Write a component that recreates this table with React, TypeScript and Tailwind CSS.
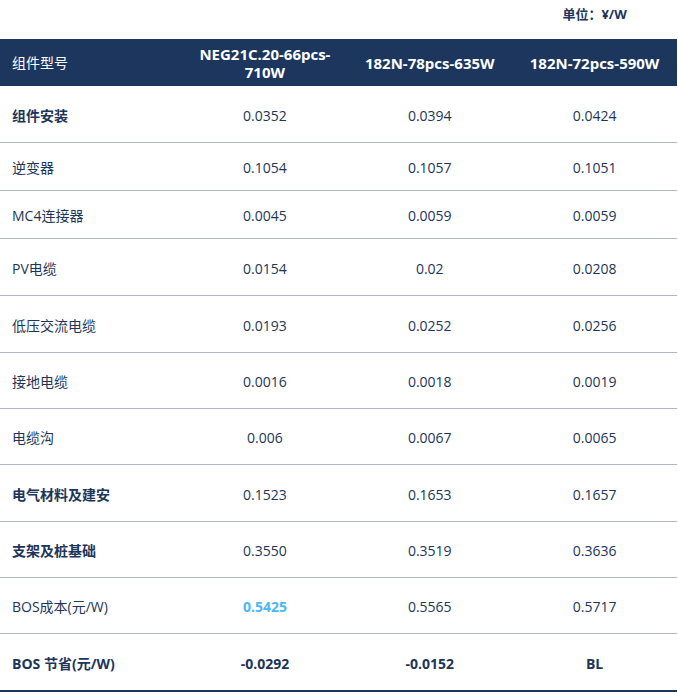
// BOS 成本对比表：三种组件型号的每瓦 BOS 分项成本，末行为相对基准（BL）的节省。

type Row = {
  label: string;
  values: [string, string, string];
  /** 行高（px），参照原图逐行量出 */
  height: string;
  bold?: boolean;
  /** 需要高亮的列（浅蓝加粗） */
  highlight?: number;
};

const MODELS = ['NEG21C.20-66pcs-710W', '182N-78pcs-635W', '182N-72pcs-590W'];

const ROWS: Row[] = [
  { label: '组件安装', values: ['0.0352', '0.0394', '0.0424'], height: 'h-[57px]', bold: true },
  { label: '逆变器', values: ['0.1054', '0.1057', '0.1051'], height: 'h-[48px]' },
  { label: 'MC4连接器', values: ['0.0045', '0.0059', '0.0059'], height: 'h-[48px]' },
  { label: 'PV电缆', values: ['0.0154', '0.02', '0.0208'], height: 'h-[57px]' },
  { label: '低压交流电缆', values: ['0.0193', '0.0252', '0.0256'], height: 'h-[57px]' },
  { label: '接地电缆', values: ['0.0016', '0.0018', '0.0019'], height: 'h-[56px]' },
  { label: '电缆沟', values: ['0.006', '0.0067', '0.0065'], height: 'h-[56px]' },
  { label: '电气材料及建安', values: ['0.1523', '0.1653', '0.1657'], height: 'h-[57px]', bold: true },
  { label: '支架及桩基础', values: ['0.3550', '0.3519', '0.3636'], height: 'h-[56px]', bold: true },
  { label: 'BOS成本(元/W)', values: ['0.5425', '0.5565', '0.5717'], height: 'h-[56px]', highlight: 0 },
];

const FONT = "font-['Open_Sans','Noto_Sans_CJK_SC',sans-serif]";

export default function App() {
  return (
    <div className={`w-[678px] bg-white text-[14px] text-[#1c3559] ${FONT}`}>
      <div className="w-[677px]">
        {/* 单位：对齐最后一列 */}
        <div className="grid h-[39px] grid-cols-[182.5px_1fr_1fr_1fr]">
          <span className="col-start-4 pt-[4px] text-center text-[13px] font-bold leading-5">
            单位：¥/W
          </span>
        </div>

        <div className="grid h-[47px] grid-cols-[182.5px_1fr_1fr_1fr] items-center bg-[#1c365e] text-white">
          <span className="pl-3 leading-5">组件型号</span>
          {MODELS.map((model) => (
            <span key={model} className="px-3 text-center text-[15px] font-bold leading-[18px] [overflow-wrap:anywhere]">
              {model.replace('pcs-', 'pcs-\u200b')}
            </span>
          ))}
        </div>

        {ROWS.map((row) => (
          <div
            key={row.label}
            className={`grid grid-cols-[182.5px_1fr_1fr_1fr] items-center border-b border-[#adb7c8] pt-[2px] ${row.height}`}
          >
            <span className={`pl-3 ${row.bold ? 'font-bold' : ''}`}>{row.label}</span>
            {row.values.map((value, i) => (
              <span
                key={i}
                className={`text-center ${row.highlight === i ? 'font-bold text-[#4cb6f7]' : ''}`}
              >
                {value}
              </span>
            ))}
          </div>
        ))}

        <div className="grid h-[58px] grid-cols-[182.5px_1fr_1fr_1fr] items-center border-b-2 border-[#1c365e] pt-[2px] font-bold">
          <span className="pl-3">BOS 节省(元/W)</span>
          <span className="text-center">-0.0292</span>
          <span className="text-center">-0.0152</span>
          <span className="text-center">BL</span>
        </div>
      </div>
    </div>
  );
}
